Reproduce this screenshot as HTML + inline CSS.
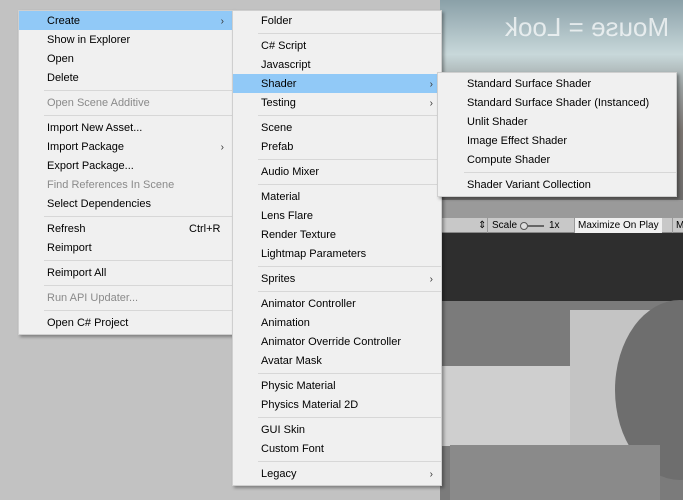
<!DOCTYPE html>
<html><head><meta charset="utf-8"><style>
*{margin:0;padding:0;box-sizing:border-box}
body{width:683px;height:500px;overflow:hidden;background:#c2c2c2;position:relative;font-family:"Liberation Sans",sans-serif;font-size:11px;color:#000}
.m{position:absolute;background:#f0f0f0;border:1px solid #cfcfcf;box-shadow:2px 2px 3px rgba(0,0,0,.35)}
.i{position:absolute;left:0;right:0;height:19px;line-height:21px}
.i span{position:absolute}
.h{background:#91c9f7}
.d{color:#8a8a8a}
.s{position:absolute;height:1px;background:#d7d7d7}
.a{position:absolute;right:8px;font-size:10px;color:#333}
</style></head><body>
<div style="position:absolute;left:440px;top:0;width:243px;height:218px;background:linear-gradient(#8aa0a8 0%,#c8d8da 25%,#9aa0a0 40%,#7a7470 60%,#6a6a6a 100%)"></div>
<div style="position:absolute;left:505px;top:12px;color:rgba(255,255,255,.7);font-size:26px;transform:scaleX(-1);white-space:nowrap">Mouse = Look</div>
<div style="position:absolute;left:440px;top:200px;width:243px;height:18px;background:#9a9a9a"></div>
<div style="position:absolute;left:440px;top:218px;width:243px;height:15px;background:#c8c8c8;border-bottom:1px solid #888;font-size:10px;line-height:15px">
<span style="position:absolute;left:38px">⇕</span>
<span style="position:absolute;left:47px;top:0;height:15px;border-left:1px solid #999;padding-left:4px">Scale</span>
<span style="position:absolute;left:80px;top:4px;width:8px;height:8px;border:1px solid #555;border-radius:50%;background:#ddd"></span>
<span style="position:absolute;left:88px;top:7px;width:16px;height:2px;background:#666"></span>
<span style="position:absolute;left:109px">1x</span>
<span style="position:absolute;left:134px;top:0;height:15px;background:#f0f0f0;border-left:1px solid #999;padding:0 3px">Maximize On Play</span>
<span style="position:absolute;left:232px;top:0;height:15px;border-left:1px solid #999;padding-left:3px">Mute</span>
</div>
<div style="position:absolute;left:440px;top:233px;width:243px;height:68px;background:#2e2e2e"></div>
<div style="position:absolute;left:440px;top:301px;width:243px;height:199px;background:#7b7b7b"></div>
<div style="position:absolute;left:440px;top:366px;width:140px;height:80px;background:#cfcfcf"></div>
<div style="position:absolute;left:570px;top:310px;width:113px;height:160px;background:#c4c4c4"></div>
<div style="position:absolute;left:615px;top:300px;width:130px;height:180px;border-radius:50%;background:#6e6e6e"></div>
<div style="position:absolute;left:450px;top:445px;width:210px;height:55px;background:#8a8a8a"></div>

<div class="m" style="left:18px;top:10px;width:215px;height:325px">
<div class="i h" style="top:0"><span style="left:28px">Create</span><span class="a">›</span></div>
<div class="i" style="top:19px"><span style="left:28px">Show in Explorer</span></div>
<div class="i" style="top:38px"><span style="left:28px">Open</span></div>
<div class="i" style="top:57px"><span style="left:28px">Delete</span></div>
<div class="s" style="top:79px;left:25px;right:0"></div>
<div class="i d" style="top:82px"><span style="left:28px">Open Scene Additive</span></div>
<div class="s" style="top:104px;left:25px;right:0"></div>
<div class="i" style="top:107px"><span style="left:28px">Import New Asset...</span></div>
<div class="i" style="top:126px"><span style="left:28px">Import Package</span><span class="a">›</span></div>
<div class="i" style="top:145px"><span style="left:28px">Export Package...</span></div>
<div class="i d" style="top:164px"><span style="left:28px">Find References In Scene</span></div>
<div class="i" style="top:183px"><span style="left:28px">Select Dependencies</span></div>
<div class="s" style="top:205px;left:25px;right:0"></div>
<div class="i" style="top:208px"><span style="left:28px">Refresh</span><span style="left:170px">Ctrl+R</span></div>
<div class="i" style="top:227px"><span style="left:28px">Reimport</span></div>
<div class="s" style="top:249px;left:25px;right:0"></div>
<div class="i" style="top:252px"><span style="left:28px">Reimport All</span></div>
<div class="s" style="top:274px;left:25px;right:0"></div>
<div class="i d" style="top:277px"><span style="left:28px">Run API Updater...</span></div>
<div class="s" style="top:299px;left:25px;right:0"></div>
<div class="i" style="top:302px"><span style="left:28px">Open C# Project</span></div>
</div>

<div class="m" style="left:232px;top:10px;width:210px;height:476px">
<div class="i" style="top:0"><span style="left:28px">Folder</span></div>
<div class="s" style="top:22px;left:25px;right:0"></div>
<div class="i" style="top:25px"><span style="left:28px">C# Script</span></div>
<div class="i" style="top:44px"><span style="left:28px">Javascript</span></div>
<div class="i h" style="top:63px"><span style="left:28px">Shader</span><span class="a">›</span></div>
<div class="i" style="top:82px"><span style="left:28px">Testing</span><span class="a">›</span></div>
<div class="s" style="top:104px;left:25px;right:0"></div>
<div class="i" style="top:107px"><span style="left:28px">Scene</span></div>
<div class="i" style="top:126px"><span style="left:28px">Prefab</span></div>
<div class="s" style="top:148px;left:25px;right:0"></div>
<div class="i" style="top:151px"><span style="left:28px">Audio Mixer</span></div>
<div class="s" style="top:173px;left:25px;right:0"></div>
<div class="i" style="top:176px"><span style="left:28px">Material</span></div>
<div class="i" style="top:195px"><span style="left:28px">Lens Flare</span></div>
<div class="i" style="top:214px"><span style="left:28px">Render Texture</span></div>
<div class="i" style="top:233px"><span style="left:28px">Lightmap Parameters</span></div>
<div class="s" style="top:255px;left:25px;right:0"></div>
<div class="i" style="top:258px"><span style="left:28px">Sprites</span><span class="a">›</span></div>
<div class="s" style="top:280px;left:25px;right:0"></div>
<div class="i" style="top:283px"><span style="left:28px">Animator Controller</span></div>
<div class="i" style="top:302px"><span style="left:28px">Animation</span></div>
<div class="i" style="top:321px"><span style="left:28px">Animator Override Controller</span></div>
<div class="i" style="top:340px"><span style="left:28px">Avatar Mask</span></div>
<div class="s" style="top:362px;left:25px;right:0"></div>
<div class="i" style="top:365px"><span style="left:28px">Physic Material</span></div>
<div class="i" style="top:384px"><span style="left:28px">Physics Material 2D</span></div>
<div class="s" style="top:406px;left:25px;right:0"></div>
<div class="i" style="top:409px"><span style="left:28px">GUI Skin</span></div>
<div class="i" style="top:428px"><span style="left:28px">Custom Font</span></div>
<div class="s" style="top:450px;left:25px;right:0"></div>
<div class="i" style="top:453px"><span style="left:28px">Legacy</span><span class="a">›</span></div>
</div>

<div class="m" style="left:437px;top:72px;width:240px;height:125px">
<div class="i" style="top:1px"><span style="left:29px">Standard Surface Shader</span></div>
<div class="i" style="top:20px"><span style="left:29px">Standard Surface Shader (Instanced)</span></div>
<div class="i" style="top:39px"><span style="left:29px">Unlit Shader</span></div>
<div class="i" style="top:58px"><span style="left:29px">Image Effect Shader</span></div>
<div class="i" style="top:77px"><span style="left:29px">Compute Shader</span></div>
<div class="s" style="top:99px;left:26px;right:0"></div>
<div class="i" style="top:102px"><span style="left:29px">Shader Variant Collection</span></div>
</div>
</body></html>
